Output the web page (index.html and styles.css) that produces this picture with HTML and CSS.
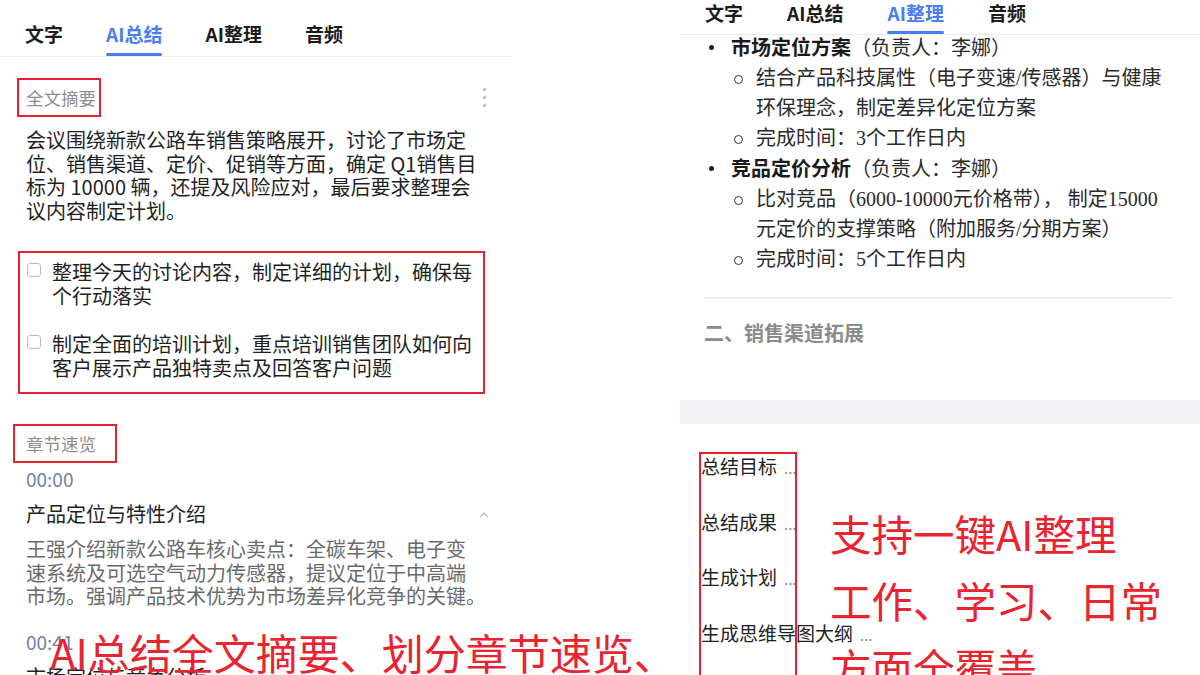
FILE: index.html
```html
<!DOCTYPE html>
<html lang="zh-CN">
<head>
<meta charset="utf-8">
<title>AI总结 / AI整理</title>
<link rel="stylesheet" href="styles.css">
</head>
<body>
<div class="stage">
  <section class="panel panel-left">
    <nav class="tabs">
      <span class="tab">文字</span>
      <span class="tab active">AI总结</span>
      <span class="tab">AI整理</span>
      <span class="tab">音频</span>
    </nav>
    <div class="content">
      <div class="sec-head">
        <span class="sec-label mark">全文摘要</span>
        <span class="more"><i></i><i></i><i></i></span>
      </div>
      <p class="summary">会议围绕新款公路车销售策略展开，讨论了市场定位、销售渠道、定价、促销等方面，确定 Q1销售目标为 10000 辆，还提及风险应对，最后要求整理会议内容制定计划。</p>
      <ul class="todos mark">
        <li><span class="cb"></span><span class="todo-text">整理今天的讨论内容，制定详细的计划，确保每个行动落实</span></li>
        <li><span class="cb"></span><span class="todo-text">制定全面的培训计划，重点培训销售团队如何向客户展示产品独特卖点及回答客户问题</span></li>
      </ul>
      <div class="sec-label mark chapters-label">章节速览</div>
      <div class="chapter">
        <div class="time">00:00</div>
        <div class="ch-title">
          <span>产品定位与特性介绍</span>
          <svg class="chev" width="10" height="7" viewBox="0 0 10 7"><path d="M1.5 5.5 L5 2 L8.5 5.5" fill="none" stroke="#bdbdbd" stroke-width="1.3" stroke-linecap="round" stroke-linejoin="round"/></svg>
        </div>
        <p class="ch-desc">王强介绍新款公路车核心卖点：全碳车架、电子变<br>速系统及可选空气动力传感器，提议定位于中高端<br>市场。强调产品技术优势为市场差异化竞争的关键。</p>
      </div>
      <div class="chapter chapter-next">
        <div class="time">00:41</div>
        <div class="ch-title"><span>市场定位与竞争分析</span></div>
      </div>
    </div>
  </section>

  <section class="panel panel-right">
    <nav class="tabs tabs-compact">
      <span class="tab">文字</span>
      <span class="tab">AI总结</span>
      <span class="tab active">AI整理</span>
      <span class="tab">音频</span>
    </nav>
    <div class="doc">
      <ul class="outline">
        <li><strong>市场定位方案</strong>（负责人：李娜）
          <ul>
            <li>结合产品科技属性（电子变速/传感器）与健康环保理念，制定差异化定位方案</li>
            <li>完成时间：3个工作日内</li>
          </ul>
        </li>
        <li><strong>竞品定价分析</strong>（负责人：李娜）
          <ul>
            <li>比对竞品（6000-10000元价格带）， 制定15000<br>元定价的支撑策略（附加服务/分期方案）</li>
            <li>完成时间：5个工作日内</li>
          </ul>
        </li>
      </ul>
      <hr class="rule">
      <h3 class="section-title">二、销售渠道拓展</h3>
    </div>
    <div class="band"></div>
    <div class="prompts-area">
      <ul class="prompts mark">
        <li>总结目标<span class="dots">...</span></li>
        <li>总结成果<span class="dots">...</span></li>
        <li>生成计划<span class="dots">...</span></li>
        <li>生成思维导图大纲<span class="dots">...</span></li>
      </ul>
    </div>
  </section>

  <div class="caption caption-left">AI总结全文摘要、划分章节速览、</div>
  <div class="caption caption-right">支持一键AI整理<br>工作、学习、日常<br>方面全覆盖</div>
</div>
</body>
</html>
```

FILE: styles.css
```css
* { box-sizing: border-box; margin: 0; padding: 0; }

html, body {
  width: 1200px;
  height: 675px;
  overflow: hidden;
  background: #ffffff;
}

body {
  font-family: "Noto Sans CJK SC", "Noto Sans", sans-serif;
  color: #1f1f1f;
}

.stage {
  position: relative;
  display: flex;
  justify-content: space-between;
  width: 1200px;
  height: 675px;
  overflow: hidden;
}

.panel { flex: none; }
.panel-left { width: 513px; }
.panel-right { width: 520px; }

/* Tabs */
.tabs {
  display: flex;
  gap: 43px;
  padding-left: 25px;
  height: 57px;
  border-bottom: 1px solid #ececec;
}

.tab {
  font-size: 19px;
  font-weight: 700;
  line-height: 24px;
  padding-top: 22px;
  color: #1c1c1c;
}

.tab.active { color: #4a7cf4; }

.tab.active::after {
  content: "";
  display: block;
  height: 3px;
  margin-top: 7px;
  border-radius: 2px;
  background: #4a7cf4;
}

.tabs-compact { height: 35px; gap: 44px; }
.tabs-compact .tab { padding-top: 1px; }
.tabs-compact .tab.active::after { margin-top: 6px; }

/* Annotation boxes */
.mark { border: 2px solid #e8202b; }

/* Left content */
.content { padding: 0 24px 0 26px; }

.sec-head {
  display: flex;
  justify-content: space-between;
  align-items: center;
  margin-top: 21px;
}

.sec-label {
  font-size: 17.5px;
  line-height: 35px;
  color: #8d8d8d;
}

.sec-head .sec-label {
  margin-left: -9px;
  padding: 0 3px 0 7px;
}

.more {
  display: flex;
  flex-direction: column;
  gap: 5px;
  margin-right: 3px;
}

.more i {
  display: block;
  width: 3px;
  height: 3px;
  border-radius: 50%;
  background: #b3b3b3;
}

.summary {
  margin-top: 11px;
  width: 452px;
  font-size: 20px;
  line-height: 23.5px;
  color: #1f1f1f;
}

.todos {
  list-style: none;
  margin-top: 29px;
  margin-left: -8px;
  width: 467px;
  padding: 7px 8px 13px 7px;
  display: flex;
  flex-direction: column;
  gap: 25px;
}

.todos li {
  display: flex;
  align-items: flex-start;
  font-size: 20px;
  line-height: 23.5px;
  color: #1f1f1f;
}

.cb {
  flex: none;
  width: 14px;
  height: 14px;
  margin-top: 3px;
  margin-right: 11px;
  border: 1.5px solid #bcbcbc;
  border-radius: 3px;
}

.chapters-label {
  width: max-content;
  margin-top: 30px;
  margin-left: -13px;
  padding: 0 19px 0 11px;
}

.time {
  margin-top: 4px;
  font-size: 19px;
  line-height: 24px;
  color: #6e81a8;
}

.ch-title {
  display: flex;
  justify-content: space-between;
  align-items: center;
  margin-top: 11px;
  font-size: 20px;
  line-height: 24px;
  color: #1f1f1f;
}

.ch-desc {
  margin-top: 11px;
  font-size: 20px;
  line-height: 23.5px;
  color: #6a6a6a;
  white-space: nowrap;
}

.chapter-next .time { margin-top: 22px; }

/* Right panel */
.doc { padding: 0 24px; }

.outline {
  list-style: none;
  margin-top: -3px;
  font-family: "Liberation Serif", "Noto Sans CJK SC", serif;
  font-size: 20px;
  line-height: 30px;
  color: #2a2a2a;
}

.outline > li {
  position: relative;
  padding-left: 27px;
}

.outline > li::before {
  content: "";
  position: absolute;
  left: 5px;
  top: 12.5px;
  width: 5px;
  height: 5px;
  border-radius: 50%;
  background: #222;
}

.outline strong {
  font-family: "Noto Sans CJK SC", sans-serif;
  font-weight: 700;
  color: #1a1a1a;
}

.outline ul { list-style: none; }

.outline ul li {
  position: relative;
  padding-left: 25px;
}

.outline ul li::before {
  content: "";
  position: absolute;
  left: 3px;
  top: 11.5px;
  width: 7px;
  height: 7px;
  border: 1.5px solid #333;
  border-radius: 50%;
}

.rule {
  margin-top: 23px;
  margin-right: 3px;
  border: 0;
  height: 2px;
  background: #efefef;
}

.section-title {
  margin-top: 19px;
  font-size: 20px;
  line-height: 30px;
  font-weight: 700;
  color: #8b8b8b;
}

.band {
  margin-top: 52px;
  height: 24px;
  background: #f1f1f5;
}

.prompts-area { padding-left: 19px; }

.prompts {
  list-style: none;
  margin-top: 28px;
  width: 98px;
  height: 260px;
  border-bottom: none;
  padding-top: 0;
  display: flex;
  flex-direction: column;
  gap: 31.7px;
  font-size: 19px;
  line-height: 24px;
  color: #222;
  white-space: nowrap;
}

.prompts li { height: 24px; }

.prompts .dots {
  margin-left: 7px;
  color: #8a8a8a;
  font-size: 15px;
  line-height: 0;
}

/* Overlay captions */
.caption {
  position: absolute;
  color: #ea2330;
  white-space: nowrap;
}

.caption-left {
  left: 50px;
  top: 627px;
  font-size: 42px;
  line-height: 50px;
}

.caption-right {
  left: 830px;
  top: 500px;
  font-size: 41.5px;
  line-height: 67px;
}
```
